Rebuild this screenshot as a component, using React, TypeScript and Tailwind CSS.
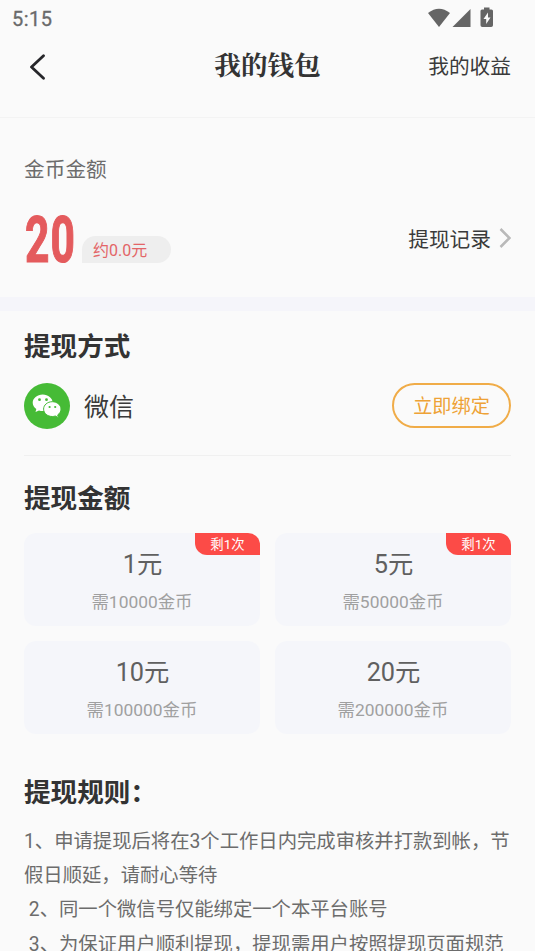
const amounts = [
  { price: '1元', cost: '需10000金币', badge: '剩1次' },
  { price: '5元', cost: '需50000金币', badge: '剩1次' },
  { price: '10元', cost: '需100000金币' },
  { price: '20元', cost: '需200000金币' },
];

const rules = [
  '1、申请提现后将在3个工作日内完成审核并打款到帐，节',
  '假日顺延，请耐心等待',
  ' 2、同一个微信号仅能绑定一个本平台账号',
  ' 3、为保证用户顺利提现，提现需用户按照提现页面规范',
];

function StatusBar() {
  return (
    <div className="flex h-[38px] items-center justify-between pr-[41px] pl-3 text-[#6a6a6a]">
      <span className="text-[20px] leading-[38px] tracking-[0.500px] [-webkit-text-stroke:0.300px_#6a6a6a]">5:15</span>
      <svg width="66" height="38" viewBox="0 0 66 38" fill="#656565">
        <path d="M0 13Q11 4.500 22 13L11 27Z" />
        <path d="M42.500 9V27H24.500Z" />
        <path
          fillRule="evenodd"
          d="M56 7.500h5.500V9.500h2q1.500 0 1.500 1.500v14.200q0 1.800-1.800 1.800h-8.900q-1.800 0-1.800-1.800V11q0-1.500 1.500-1.500h2ZM60 12.500L55.500 19h2.700v5L62.500 17.500h-2.500Z"
        />
      </svg>
    </div>
  );
}

function WechatIcon() {
  return (
    <svg width="46" height="46" viewBox="0 0 46 46">
      <circle cx="23" cy="23" r="23" fill="#46bb36" />
      <path d="M18.700 11.500c-5.500 0-10 3.700-10 8.300 0 2.600 1.400 4.800 3.600 6.300l-.8 3 3.500-1.700q1.800.6 3.700.6c5.500 0 10-3.700 10-8.200s-4.500-8.300-10-8.300Z" fill="#fff" />
      <path d="M28.300 18.700c-4.900 0-8.700 3.300-8.700 7.400s3.800 7.400 8.700 7.400q1.600 0 3-.5l3.200 1.700-.8-2.800c2-1.400 3.300-3.400 3.300-5.800 0-4.100-3.900-7.400-8.700-7.400Z" fill="#fff" stroke="#46bb36" strokeWidth="1" />
      <g fill="#46bb36">
        <circle cx="15.500" cy="16.700" r="1.400" />
        <circle cx="22.500" cy="16.700" r="1.400" />
        <circle cx="25.600" cy="24" r="1.100" />
        <circle cx="31.200" cy="24" r="1.100" />
      </g>
    </svg>
  );
}

export default function App() {
  return (
    <div className="h-[951px] w-full overflow-hidden bg-[#fafafa] font-['Roboto','Noto_Sans_CJK_SC',sans-serif] text-[#3a3a3a]">
      <StatusBar />
      <header className="grid h-20 grid-cols-3 items-start border-b border-[#f3f3f3] px-6 pt-[8px]">
        <svg className="mt-[8px] ml-[5px]" width="17" height="26" viewBox="0 0 17 26" fill="none" stroke="#26262a" strokeWidth="2.800" strokeLinecap="round" strokeLinejoin="round">
          <path d="M14.500 1.700L2.500 13L14.500 24.300" />
        </svg>
        <h1 className="text-center font-['Noto_Serif_CJK_SC','Noto_Sans_CJK_SC',serif] text-[26.600px] leading-[36px] font-bold whitespace-nowrap text-[#333333]">我的钱包</h1>
        <span className="pt-px text-right text-[20.700px] leading-[41px]">我的收益</span>
      </header>

      <section className="flex h-[179px] flex-col px-6 pt-[36px]">
        <div className="text-[20.700px] leading-[32px] text-[#6c6c6c]">金币金额</div>
        <div className="mt-[28px] flex h-[50px] items-end">
          <div className="h-[50px] w-[58px] pl-px">
            <span className="inline-block origin-left scale-x-[0.665] text-[64px] leading-[53px] font-bold tracking-[1.500px] text-[#e45b5d] [-webkit-text-stroke:1.200px_#e45b5d]">20</span>
          </div>
          <div className="mb-[1px] h-[27px] w-[89px] rounded-t-[13.500px] rounded-br-[13.500px] bg-[#eeeeee] pl-[11px] text-[16px] leading-[30px] text-[#e36567]">约0.0元</div>
          <div className="ml-auto flex h-[50px] items-center gap-[8px]">
            <span className="pt-px text-[20.700px] leading-[52px]">提现记录</span>
            <svg className="-mt-[2px]" width="12" height="20" viewBox="0 0 12 20" fill="none" stroke="#b9b9b9" strokeWidth="2.500">
              <path d="M1.500 1L10.500 10L1.500 19" />
            </svg>
          </div>
        </div>
      </section>
      <div className="h-[14px] bg-[#f5f5fa]" />

      <main className="px-6">
        <h2 className="pt-[18px] text-[26.600px] leading-[36px] font-bold text-[#333333]">提现方式</h2>
        <div className="mt-[18px] flex h-[46px] items-center">
          <WechatIcon />
          <span className="ml-[14px] pt-[3px] text-[25px] leading-[46px]">微信</span>
          <button className="mb-px ml-auto h-[45px] w-[119px] rounded-full border-2 border-[#f0ac48] pt-[3px] text-[19.200px] leading-[38px] text-[#eea236]">立即绑定</button>
        </div>
        <div className="mt-[26px] h-px bg-[#f0f0f0]" />

        <h2 className="mt-[25px] text-[26.600px] leading-[36px] font-bold text-[#333333]">提现金额</h2>
        <div className="mt-[16px] grid grid-cols-2 gap-x-[15px] gap-y-[15px]">
          {amounts.map((item) => (
            <div key={item.price} className="relative h-[93px] rounded-xl bg-[#f5f6fa] pt-[13px] text-center">
              <div className="pl-px text-[25.300px] leading-[38px] text-[#606060]">{item.price}</div>
              <div className="mt-[5px] text-[17.400px] leading-[26px] text-[#a0a0a0]">{item.cost}</div>
              {item.badge && (
                <span className="absolute top-0 right-0 h-[22px] w-[65px] rounded-tr-xl rounded-bl-xl bg-[#fc4b47] text-[13.400px] leading-[23px] text-white">{item.badge}</span>
              )}
            </div>
          ))}
        </div>

        <h2 className="mt-[41px] text-[26.600px] leading-[36px] font-bold text-[#333333]">提现规则：</h2>
        <div className="mt-[14px] text-[19.330px] leading-[34.200px] whitespace-pre text-[#6c6c6c]">
          {rules.map((line) => (
            <p key={line}>{line}</p>
          ))}
        </div>
      </main>
    </div>
  );
}
